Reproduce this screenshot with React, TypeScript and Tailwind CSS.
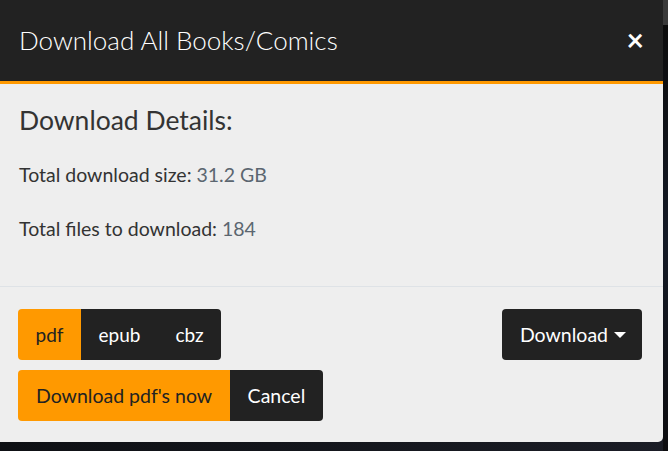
export default function App() {
  const font = { fontFamily: "Lato, 'Liberation Sans', sans-serif" };
  return (
    <div
      className="flex w-[668px] h-[451px] overflow-hidden items-start bg-gradient-to-br from-[#1d2522] via-[#0e1014] to-[#1b1d26]"
      style={font}
    >
      <div className="w-[663px] shrink-0 bg-[#eeeeee] rounded-br-[5px] overflow-hidden">
        {/* header */}
        <div className="h-[84px] bg-[#222222] border-b-[3px] border-[#ff9900] flex items-center justify-between pl-[19px] pr-[19px]">
          <h2 className="text-[26px] font-light text-white leading-[34px] pb-[1px]">
            Download All Books/Comics
          </h2>
          <button className="text-white text-[30px] font-bold leading-none pb-[3px]">×</button>
        </div>

        {/* body */}
        <div className="h-[202px] px-[19px] pt-[19px] text-[#333333]">
          <h3 className="text-[26.5px] leading-[35px] mb-[23px]">Download Details:</h3>
          <p className="text-[19.5px] leading-[27px] mb-[27px]">
            Total download size: <span className="text-[#5b6670]">31.2 GB</span>
          </p>
          <p className="text-[19.5px] leading-[27px]">
            Total files to download: <span className="text-[#5b6670]">184</span>
          </p>
        </div>

        {/* footer */}
        <div className="border-t border-[#dee2e6] pt-[22px] pb-[21px] pl-[18px] pr-[21px] flex justify-between items-start">
          <div className="flex flex-col items-start gap-[10px]">
            <div className="flex rounded-[4px] overflow-hidden text-[19px] leading-[27px]">
              <button className="h-[51px] bg-[#ff9900] text-[#222222] px-[17.5px]">pdf</button>
              <button className="h-[51px] bg-[#222222] text-white px-[17.5px]">epub</button>
              <button className="h-[51px] bg-[#222222] text-white px-[17.5px]">cbz</button>
            </div>
            <div className="flex rounded-[4px] overflow-hidden text-[19.5px] leading-[27px]">
              <button className="h-[51px] bg-[#ff9900] text-[#222222] px-[18px]">Download pdf's now</button>
              <button className="h-[51px] bg-[#222222] text-white px-[17.5px]">Cancel</button>
            </div>
          </div>
          <button className="h-[51px] flex items-center bg-[#222222] text-white rounded-[4px] text-[19.5px] leading-[27px] pl-[18px] pr-[16px]">
            Download
            <span className="ml-[6px] w-0 h-0 border-x-[6px] border-x-transparent border-t-[6px] border-t-white mt-[1px]" />
          </button>
        </div>
      </div>
      <div className="w-[5px] shrink-0 flex flex-col h-full">
        <div className="h-[25px] bg-[#3a3a3a]" />
        <div className="flex-1 bg-gradient-to-b from-[#0c0c0c] via-[#141a26] to-[#0d0d10]" />
      </div>
    </div>
  );
}
